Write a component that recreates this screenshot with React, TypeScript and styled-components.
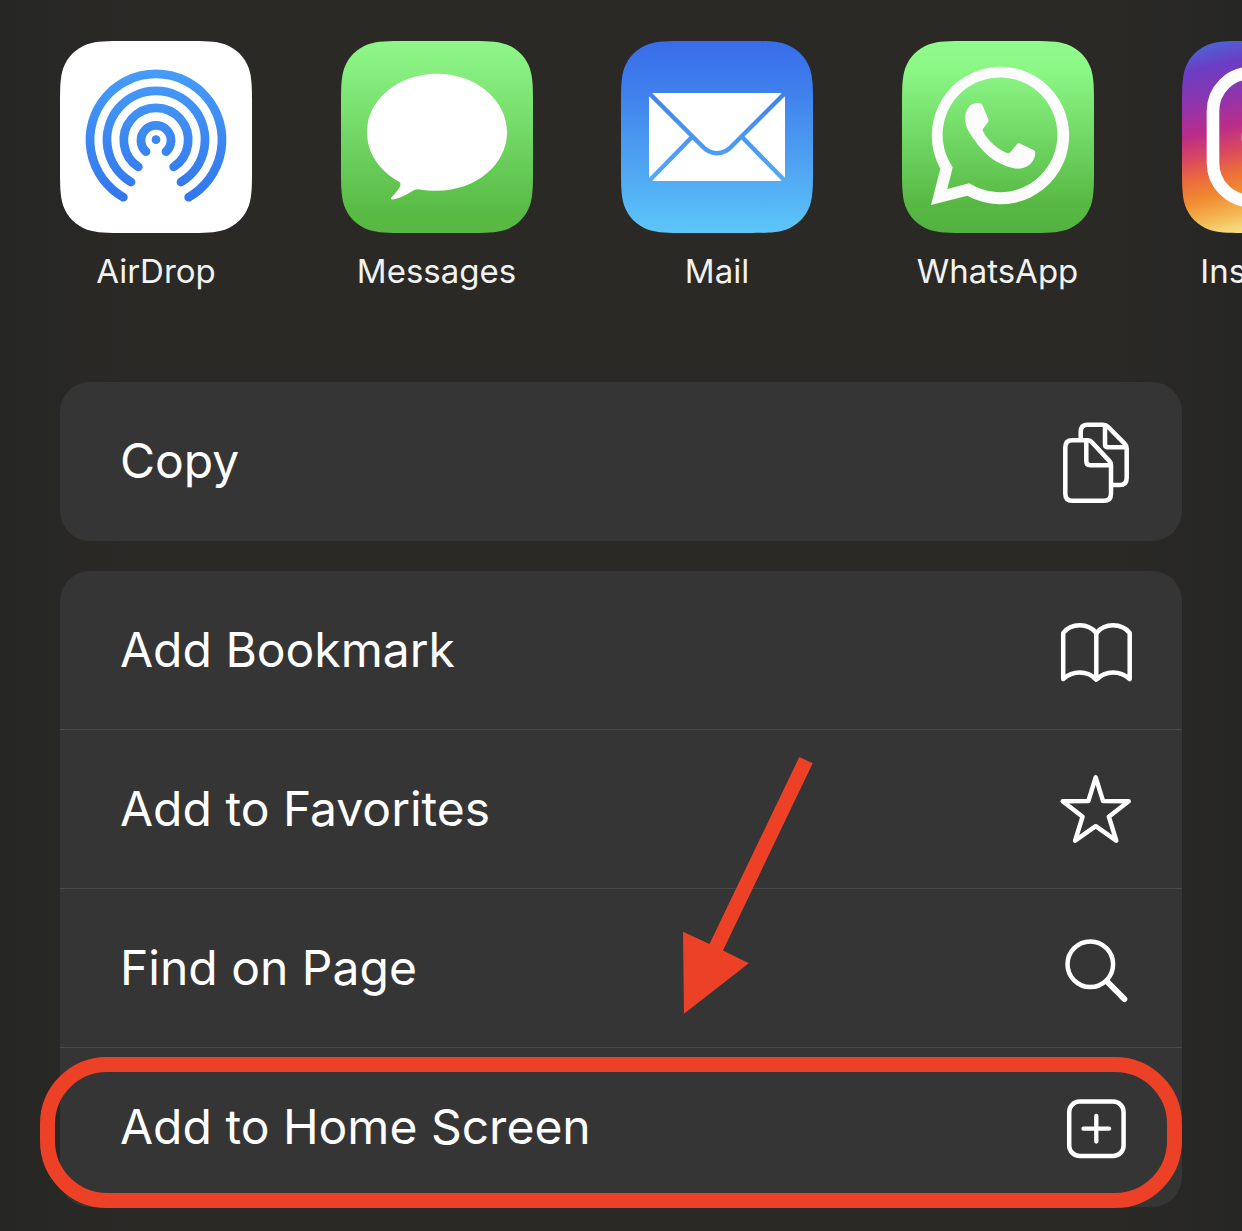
import React from "react";
import styled, { createGlobalStyle } from "styled-components";

const GlobalStyle = createGlobalStyle`
  *, *::before, *::after { box-sizing: border-box; }
  body {
    margin: 0;
    background: #292826;
    color: #fff;
    font-family: Inter, Roboto, "Liberation Sans", sans-serif;
  }
`;

const Sheet = styled.main`
  min-height: 100vh;
  padding: 41px 60px 24px;
  overflow: hidden;
  background: linear-gradient(90deg, #262624 0%, #2a2926 10%, #2a2926 90%, #262624 100%);
`;

const AppStrip = styled.nav`
  display: grid;
  grid-auto-flow: column;
  grid-auto-columns: 25%;
  margin-bottom: 91px;
`;

const AppButton = styled.button`
  display: flex;
  flex-direction: column;
  align-items: center;
  gap: 18px;
  width: 192px;
  padding: 0;
  border: 0;
  background: none;
  color: #f2f2f2;
  font: inherit;
  font-size: 33px;
  line-height: 40px;
  cursor: pointer;
`;

const TileSvg = styled.svg`
  display: block;
  width: 192px;
  height: 192px;
`;

const Groups = styled.div`
  display: flex;
  flex-direction: column;
  gap: 30px;
`;

const Card = styled.section`
  position: relative;
  border-radius: 30px;
  background: #353535;
`;

const ActionButton = styled.button<{ $divided?: boolean }>`
  position: relative;
  display: flex;
  align-items: center;
  justify-content: space-between;
  width: 100%;
  height: 159px;
  padding: 0 44px 0 60px;
  border: 0;
  border-bottom: 1px solid ${(p) => (p.$divided ? "#4a4a4a" : "transparent")};
  background: none;
  color: #fff;
  font: inherit;
  font-size: 48px;
  line-height: 60px;
  text-align: left;
  cursor: pointer;
`;

const GlyphSvg = styled.svg`
  flex: none;
  width: 84px;
  height: 84px;
  fill: none;
  stroke: #fff;
  stroke-width: 4.5;
  stroke-linecap: round;
  stroke-linejoin: round;
`;

const Ring = styled.span`
  position: absolute;
  inset: 9px 0 -2px -20px;
  border: 15px solid #ec4126;
  border-radius: 67px;
  pointer-events: none;
`;

const Arrow = styled.svg`
  position: absolute;
  left: 622px;
  top: 185px;
  width: 132px;
  height: 260px;
  fill: #ec4126;
  pointer-events: none;
`;

const SQUIRCLE =
  "M0 65.7C0 46.8 0 37.3 3.2 27.2C7.3 16 16 7.3 27.2 3.2C37.3 0 46.8 0 65.7 0H126.3C145.2 0 154.7 0 164.8 3.2C176 7.3 184.7 16 188.8 27.2C192 37.3 192 46.8 192 65.7V126.3C192 145.2 192 154.7 188.8 164.8C184.7 176 176 184.7 164.8 188.8C154.7 192 145.2 192 126.3 192H65.7C46.8 192 37.3 192 27.2 188.8C16 184.7 7.3 176 3.2 164.8C0 154.7 0 145.2 0 126.3Z";

type Stop = [number, string];

function Gradient({ id, stops, from = 0, to = 192, slant = 0 }: { id: string; stops: Stop[]; from?: number; to?: number; slant?: number }) {
  return (
    <linearGradient id={id} gradientUnits="userSpaceOnUse" x1={0} y1={from} x2={slant} y2={to}>
      {stops.map(([offset, color]) => (
        <stop key={offset} offset={offset} stopColor={color} />
      ))}
    </linearGradient>
  );
}

function Tile({ children }: { children: React.ReactNode }) {
  return (
    <TileSvg viewBox="0 0 192 192" aria-hidden="true">
      {children}
    </TileSvg>
  );
}

const AirDropTile = () => (
  <Tile>
    <Gradient id="airdrop" from={28} to={162} stops={[[0, "#469df8"], [1, "#3275ec"]]} />
    <path d={SQUIRCLE} fill="#fff" />
    <g fill="none" stroke="url(#airdrop)" strokeWidth="8.8" strokeLinecap="round">
      <path d="M63.3 156.2A66 66 0 1 1 128.7 156.2" />
      <path d="M71 141A49 49 0 1 1 121 141" />
      <path d="M78.3 125.9A32.2 32.2 0 1 1 113.7 125.9" />
      <path d="M86 110.6A15 15 0 1 1 106 110.6" />
    </g>
    <circle cx="96" cy="98.7" r="4.4" fill="#3a86f2" />
  </Tile>
);

const MessagesTile = () => (
  <Tile>
    <Gradient id="messages" stops={[[0, "#8ff788"], [0.15, "#87ef80"], [0.9, "#58ba44"], [1, "#58b843"]]} />
    <path d={SQUIRCLE} fill="url(#messages)" />
    <path
      d="M96 32.8C134.7 32.8 166 59 166 91.3S134.7 149.8 96 149.8C89.5 149.8 83.5 149.3 77.5 148.2C73.5 147.7 70 151 65.5 153.5C60.8 156.2 55.5 158 51.3 158.5C49.8 158.7 49.3 157.5 50.3 156.6C54 153 57 149.3 59 145.3C60 143 59.7 141.8 58 140.7C38.5 130 26 112 26 91.3C26 59 57.3 32.8 96 32.8Z"
      fill="#fff"
    />
  </Tile>
);

const MailTile = () => (
  <Tile>
    <Gradient id="mail" stops={[[0, "#396ce9"], [0.25, "#3f7fec"], [0.8, "#55b2f5"], [1, "#5dc6f9"]]} />
    <path d={SQUIRCLE} fill="url(#mail)" />
    <rect x="28" y="52" width="136" height="88" rx="5" fill="#fff" />
    <g fill="none" stroke="url(#mail)" strokeWidth="4.4">
      <path d="M28 52L80.5 104.5C85 109.5 89.5 112.2 96 112.2S107 109.5 111.5 104.5L164 52" />
      <path d="M28 140L70.7 96.3M164 140L121.3 96.3" />
    </g>
  </Tile>
);

const WhatsAppTile = () => (
  <Tile>
    <Gradient id="whatsapp" stops={[[0, "#90fb8b"], [0.15, "#8bf785"], [0.85, "#57b944"], [1, "#53b23f"]]} />
    <path d={SQUIRCLE} fill="url(#whatsapp)" />
    <path
      fillRule="evenodd"
      d="M29 164L38.3 127.7A68.7 68.7 0 1 1 65.3 154.7ZM45.3 148L67.3 142.3A57.4 57.4 0 1 0 50.7 126.3Z"
      fill="#fcfcfc"
    />
    <path
      d="M72 62.4C75 61.7 77.5 61.8 79.1 62.4C80 62.8 80.3 63.7 80.8 65L86.2 78C86.7 79.4 86.5 80.2 85.8 81.4L81.3 87.4C80.4 88.6 80.5 89.6 81.2 90.7C87.3 101 94.8 107.6 104.8 112C106.3 112.6 107.3 112.4 108.3 111.3L115 103.2C115.9 102.1 116.6 102 117.9 102.5L131.3 108.9C132.7 109.6 133.2 110.2 133.2 111.5C133.3 119.5 127.5 126 118.8 127.5C111.5 128.5 102.5 124.8 95 120.8C85.5 115.8 77.5 106.5 70.8 96.8C66.5 90.5 63 84.5 63 77.5C63 70.5 66.5 64 72 62.4Z"
      fill="#fcfcfc"
    />
  </Tile>
);

const InstagramTile = () => (
  <Tile>
    <Gradient
      id="instagram"
      slant={48}
      stops={[[0, "#4470dc"], [0.16, "#6b3ec4"], [0.32, "#8d35ae"], [0.48, "#bc2d87"], [0.6, "#da4a5e"], [0.7, "#ec6c3c"], [0.8, "#f08a31"], [0.9, "#f3b34e"], [1, "#f8dc80"]]}
    />
    <path d={SQUIRCLE} fill="url(#instagram)" />
    <g fill="none" stroke="#fff" strokeWidth="12.6">
      <rect x="31" y="32" width="130" height="128" rx="38" />
      <circle cx="96" cy="96" r="30" />
    </g>
    <circle cx="134" cy="58" r="8" fill="#fff" />
  </Tile>
);

const CopyGlyph = () => (
  <>
    <path d="M34.5 21.3H18.3Q11.3 21.3 11.3 28.3V74.7Q11.3 81.7 18.3 81.7H50Q57 81.7 57 74.7V46Q57 43.6 55.3 41.9L38.6 24Q36.5 21.3 34.5 21.3Z" />
    <path d="M32.3 23V42.3Q32.3 46.3 36.3 46.3H55.5" />
    <path d="M26.7 20V12.7Q26.7 5.7 33.7 5.7H49Q52 5.7 54.2 8L70.6 24.7Q72.7 26.8 72.7 29.5V59Q72.7 66 65.7 66H58.5" />
    <path d="M51 7.5V25.3Q51 28.3 54 28.3H71" />
  </>
);

const BookGlyph = () => (
  <>
    <path d="M42.3 25C38.3 20 32.3 17.3 25.8 17.3S13 20 9.2 25V71C14 66.8 19.3 64.5 25.7 64.5S38 67 42.3 71.7C46.8 67 52.5 64.5 59 64.5S71 66.8 75.7 71V25C71.8 20 65.6 17.3 59 17.3S46.5 20 42.3 25Z" />
    <path d="M42.3 25V71" />
  </>
);

const StarGlyph = () => (
  <path d="M41.7 10.3L49 33.9L74.7 34.2L54.8 49.7L62.3 73.7L41.7 59.2L21.1 73.7L28.6 49.7L8.7 34.2L34.4 33.9Z" />
);

const SearchGlyph = () => (
  <>
    <circle cx="36.3" cy="38.3" r="22.8" />
    <path d="M53.5 56L70.3 73" strokeWidth="6" />
  </>
);

const PlusGlyph = () => (
  <>
    <rect x="15.2" y="16.5" width="54.4" height="54.4" rx="10.5" />
    <path d="M29.5 43.7H55.1M42.3 30.9V56.5" strokeWidth="4.3" />
  </>
);

const apps = [
  { name: "AirDrop", Icon: AirDropTile },
  { name: "Messages", Icon: MessagesTile },
  { name: "Mail", Icon: MailTile },
  { name: "WhatsApp", Icon: WhatsAppTile },
  { name: "Instagram", Icon: InstagramTile },
];

const pageActions = [
  { label: "Add Bookmark", Glyph: BookGlyph },
  { label: "Add to Favorites", Glyph: StarGlyph },
  { label: "Find on Page", Glyph: SearchGlyph },
  { label: "Add to Home Screen", Glyph: PlusGlyph, highlighted: true },
];

interface ActionProps {
  label: string;
  Glyph: React.ComponentType;
  divided?: boolean;
  highlighted?: boolean;
}

function Action({ label, Glyph, divided, highlighted }: ActionProps) {
  return (
    <ActionButton type="button" $divided={divided}>
      <span>{label}</span>
      <GlyphSvg viewBox="0 0 84 84" aria-hidden="true">
        <Glyph />
      </GlyphSvg>
      {highlighted && <Ring />}
    </ActionButton>
  );
}

export default function App() {
  return (
    <>
      <GlobalStyle />
      <Sheet>
        <AppStrip aria-label="Share with">
          {apps.map(({ name, Icon }) => (
            <AppButton key={name} type="button">
              <Icon />
              <span>{name}</span>
            </AppButton>
          ))}
        </AppStrip>
        <Groups>
          <Card>
            <Action label="Copy" Glyph={CopyGlyph} />
          </Card>
          <Card>
            {pageActions.map((action, index) => (
              <Action key={action.label} {...action} divided={index < pageActions.length - 1} />
            ))}
            <Arrow viewBox="0 0 132 260" aria-hidden="true">
              <path d="M117.3 1L130.7 7.3L41 194.5L66.8 207.3L2 257.7L1 175.7L27.5 188Z" />
            </Arrow>
          </Card>
        </Groups>
      </Sheet>
    </>
  );
}
